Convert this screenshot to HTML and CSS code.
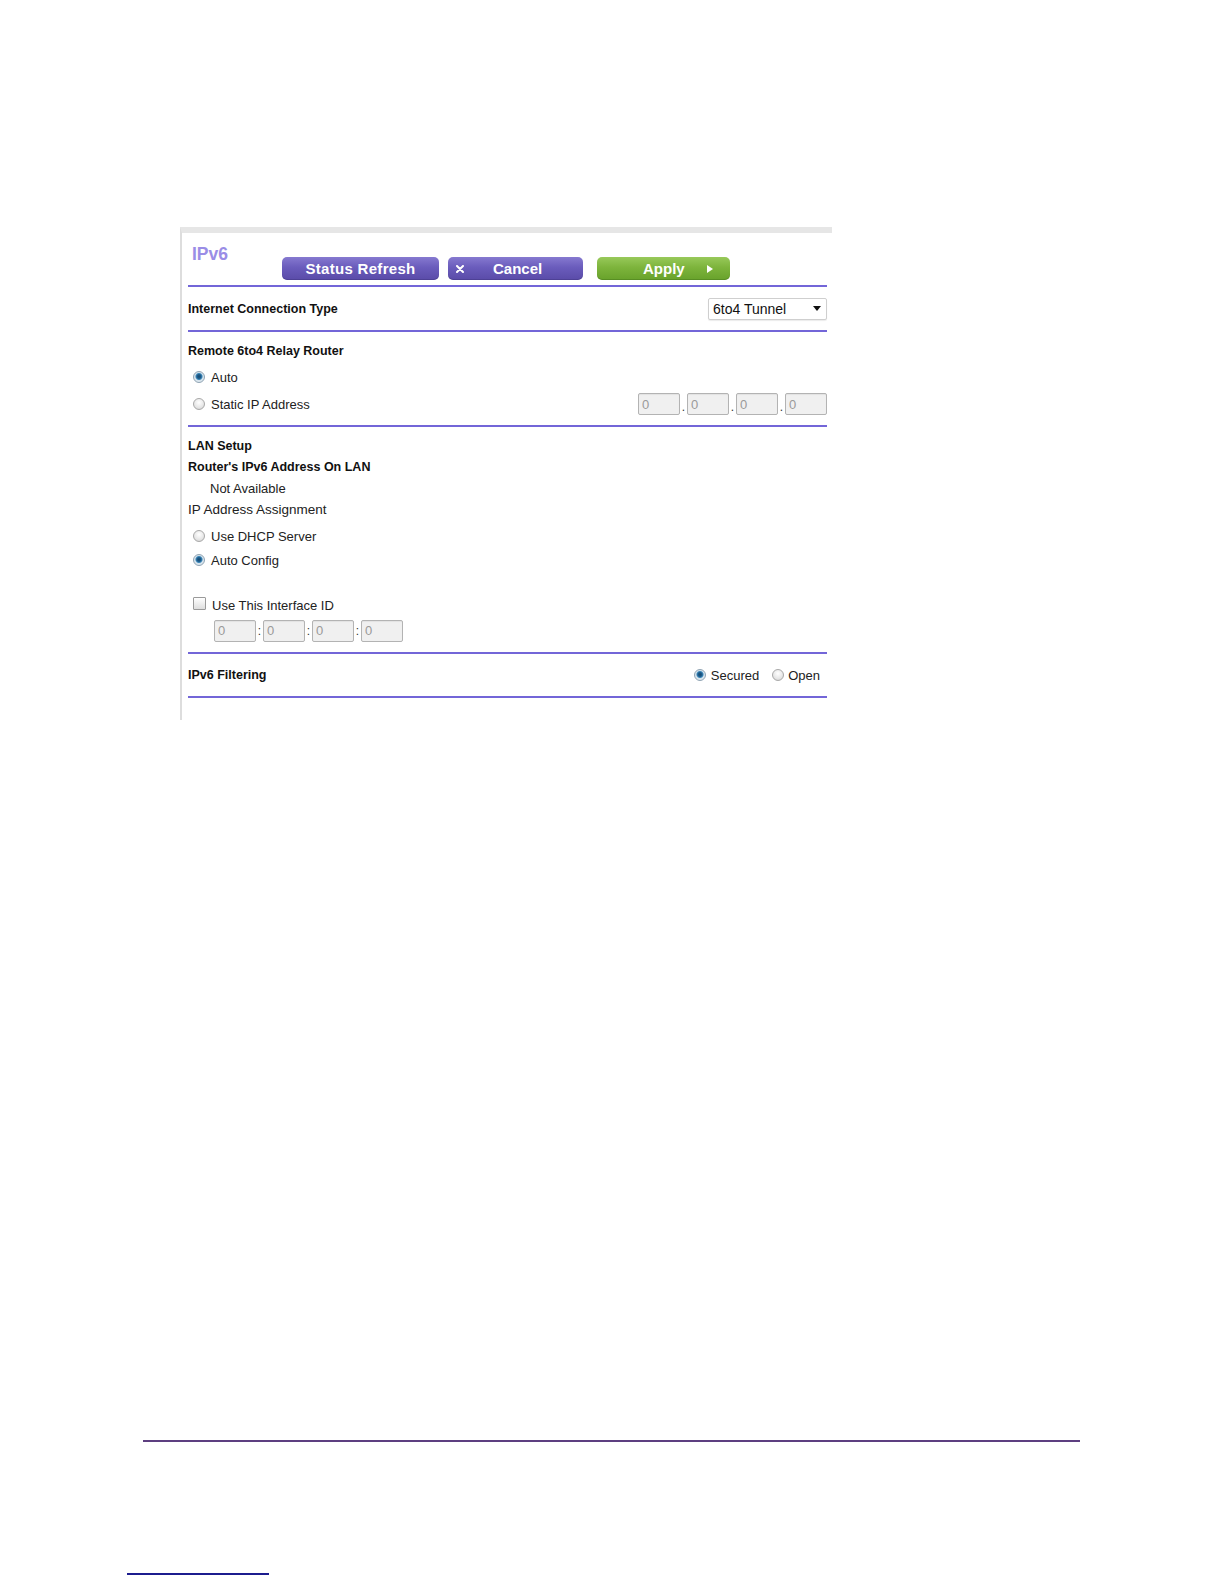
FILE: index.html
```html
<!DOCTYPE html>
<html lang="en">
<head>
<meta charset="utf-8">
<title>IPv6</title>
<link rel="stylesheet" href="styles.css">
</head>
<body>
<div class="page">
  <div class="panel">
    <div class="header">
      <div class="title">IPv6</div>
      <div class="btn btn-purple btn-refresh">Status Refresh</div>
      <div class="btn btn-purple btn-cancel">
        <svg class="x-icon" width="8" height="8" viewBox="0 0 8 8"><path d="M1 1 L7 7 M7 1 L1 7" stroke="#fff" stroke-width="2" stroke-linecap="round"/></svg>
        <span class="cancel-text">Cancel</span>
      </div>
      <div class="btn btn-green btn-apply">
        <span>Apply</span>
        <svg class="play-icon" width="6" height="8" viewBox="0 0 6 8"><path d="M0 0 L6 4 L0 8 Z" fill="#fff"/></svg>
      </div>
    </div>
    <div class="rule"></div>

    <div class="row-ict">
      <div class="label">Internet Connection Type</div>
      <div class="select">
        <span>6to4 Tunnel</span>
        <svg class="caret" width="8" height="5" viewBox="0 0 8 5"><path d="M0 0 L8 0 L4 5 Z" fill="#111"/></svg>
      </div>
    </div>
    <div class="rule"></div>

    <div class="section remote">
      <div class="label line18">Remote 6to4 Relay Router</div>
      <div class="opt opt-auto"><span class="radio on"></span><span class="text">Auto</span></div>
      <div class="opt opt-static">
        <span class="radio"></span><span class="text">Static IP Address</span>
        <div class="ipgroup">
          <input class="ipbox" type="text" value="0"><span class="sep">.</span><input class="ipbox" type="text" value="0"><span class="sep">.</span><input class="ipbox" type="text" value="0"><span class="sep">.</span><input class="ipbox" type="text" value="0">
        </div>
      </div>
    </div>
    <div class="rule"></div>

    <div class="section lan">
      <div class="label line21">LAN Setup</div>
      <div class="label line21">Router's IPv6 Address On LAN</div>
      <div class="text line21 indent">Not Available</div>
      <div class="text text-wide line21">IP Address Assignment</div>
      <div class="opt opt-dhcp"><span class="radio"></span><span class="text">Use DHCP Server</span></div>
      <div class="opt opt-autoconf"><span class="radio on"></span><span class="text">Auto Config</span></div>
      <div class="opt opt-check"><span class="checkbox"></span><span class="text">Use This Interface ID</span></div>
      <div class="ifid">
        <input class="ipbox" type="text" value="0"><span class="sep colon">:</span><input class="ipbox" type="text" value="0"><span class="sep colon">:</span><input class="ipbox" type="text" value="0"><span class="sep colon">:</span><input class="ipbox" type="text" value="0">
      </div>
    </div>
    <div class="rule"></div>

    <div class="row-filter">
      <div class="label">IPv6 Filtering</div>
      <div class="filter-opts">
        <span class="radio on"></span><span class="text">Secured</span>
        <span class="radio gap"></span><span class="text">Open</span>
      </div>
    </div>
    <div class="rule"></div>
  </div>

  <div class="footer-rule"></div>
  <div class="link-rule"></div>
</div>
</body>
</html>
```

FILE: styles.css
```css
html, body {
  margin: 0;
  padding: 0;
  background: #ffffff;
}

body {
  font-family: "Liberation Sans", Arial, sans-serif;
  color: #111111;
}

.page {
  padding-top: 227px;
}

.panel {
  margin-left: 180px;
  width: 652px;
  box-sizing: border-box;
  border-top: 6px solid #e6e6e6;
  border-left: 2px solid #dddddd;
  padding: 0 5px 22px 6px;
}

/* header */
.header {
  height: 52px;
  display: flex;
  align-items: flex-start;
}

.title {
  margin: 11px 0 0 4px;
  width: 90px;
  font-size: 17.5px;
  line-height: 20px;
  font-weight: bold;
  color: #9a8de6;
}

.btn {
  margin-top: 24px;
  height: 23px;
  border-radius: 5px;
  box-sizing: border-box;
  display: flex;
  align-items: center;
  color: #ffffff;
  font-size: 15px;
  font-weight: bold;
  line-height: 23px;
}

.btn-purple {
  background: linear-gradient(to bottom, #8679d0 0%, #6a5cbc 45%, #5a4ba8 100%);
  box-shadow: inset 0 -1px 0 rgba(40, 30, 90, 0.25);
}

.btn-green {
  background: linear-gradient(to bottom, #98c95a 0%, #7db43c 45%, #68a22b 100%);
  box-shadow: inset 0 -1px 0 rgba(40, 80, 10, 0.25);
}

.btn-refresh {
  width: 157px;
  justify-content: center;
  letter-spacing: 0.3px;
}

.btn-cancel {
  width: 135px;
  margin-left: 9px;
}

.x-icon {
  margin-left: 8px;
}

.cancel-text {
  margin-left: 29px;
}

.btn-apply {
  width: 133px;
  margin-left: 14px;
  padding-left: 46px;
}

.play-icon {
  margin-left: 22px;
}

.rule {
  height: 2px;
  background: #7366d8;
}

/* common text */
.label {
  font-size: 12.5px;
  font-weight: bold;
  color: #111111;
}

.text {
  font-size: 13px;
  color: #222222;
}

.text-wide {
  font-size: 13.5px;
}

.line18 {
  line-height: 18px;
}

.line21 {
  line-height: 21px;
}

.indent {
  padding-left: 22px;
}

/* internet connection type */
.row-ict {
  height: 43px;
  display: flex;
  align-items: center;
  justify-content: space-between;
}

.select {
  width: 119px;
  height: 22px;
  box-sizing: border-box;
  border: 1px solid #cfcfcf;
  border-radius: 2px;
  box-shadow: 0 1px 1px rgba(0, 0, 0, 0.08);
  padding: 0 5px 0 4px;
  display: flex;
  align-items: center;
  justify-content: space-between;
  font-size: 14px;
  color: #111111;
  background: #ffffff;
}

/* sections */
.section.remote {
  padding: 10px 0 10px;
}

.section.lan {
  padding: 9px 0 10px;
}

.opt {
  height: 22px;
  display: flex;
  align-items: center;
}

.opt-auto {
  margin-top: 6px;
}

.opt-static {
  margin-top: 5px;
}

.opt-dhcp {
  margin-top: 5px;
}

.opt-autoconf {
  margin-top: 2px;
}

.opt-check {
  margin-top: 23px;
}

.radio {
  width: 12px;
  height: 12px;
  box-sizing: border-box;
  border-radius: 50%;
  border: 1px solid #a8a8a8;
  background: radial-gradient(circle at 50% 35%, #ffffff 0%, #e6e6e6 60%, #cfcfcf 100%);
  margin-left: 5px;
  margin-right: 6px;
  flex: none;
}

.radio.on {
  border-color: #8fa3b3;
  background: radial-gradient(circle at 50% 45%, #16486f 0, #1f5d8c 2px, #3a86b8 3px, #d4e2ec 4px, #eef2f5 100%);
}

.checkbox {
  width: 13px;
  height: 13px;
  box-sizing: border-box;
  border: 1px solid #9a9a9a;
  border-radius: 1px;
  background: linear-gradient(to bottom, #ffffff, #dedede);
  margin-left: 5px;
  margin-right: 6px;
  margin-bottom: 4px;
  flex: none;
}

.ipgroup {
  margin-left: auto;
  display: flex;
  align-items: center;
}

.ipbox {
  width: 42px;
  height: 22px;
  box-sizing: border-box;
  margin: 0;
  padding: 0 0 0 3px;
  border: 1px solid #b3b3b3;
  border-radius: 2px;
  background: #f0f0f0;
  font-family: "Liberation Sans", Arial, sans-serif;
  font-size: 13px;
  color: #9a9a9a;
  box-shadow: inset 0 1px 1px rgba(0, 0, 0, 0.06);
}

.sep {
  width: 7px;
  text-align: center;
  font-size: 12px;
  color: #333333;
  align-self: flex-end;
  line-height: 16px;
}

.sep.colon {
  align-self: center;
  line-height: 22px;
}

.ifid {
  margin-top: 3px;
  margin-left: 26px;
  height: 23px;
  display: flex;
  align-items: center;
}

/* filtering */
.row-filter {
  height: 42px;
  display: flex;
  align-items: center;
  justify-content: space-between;
}

.filter-opts {
  display: flex;
  align-items: center;
  padding-right: 7px;
}

.filter-opts .radio {
  margin-left: 0;
  margin-right: 5px;
}

.filter-opts .radio.gap {
  margin-left: 13px;
  margin-right: 4px;
}

/* page footer */
.footer-rule {
  margin-top: 720px;
  margin-left: 143px;
  width: 937px;
  height: 2px;
  background: #5d3f80;
}

.link-rule {
  margin-top: 131px;
  margin-left: 127px;
  width: 142px;
  height: 2px;
  background: #1c1c8e;
}
```
